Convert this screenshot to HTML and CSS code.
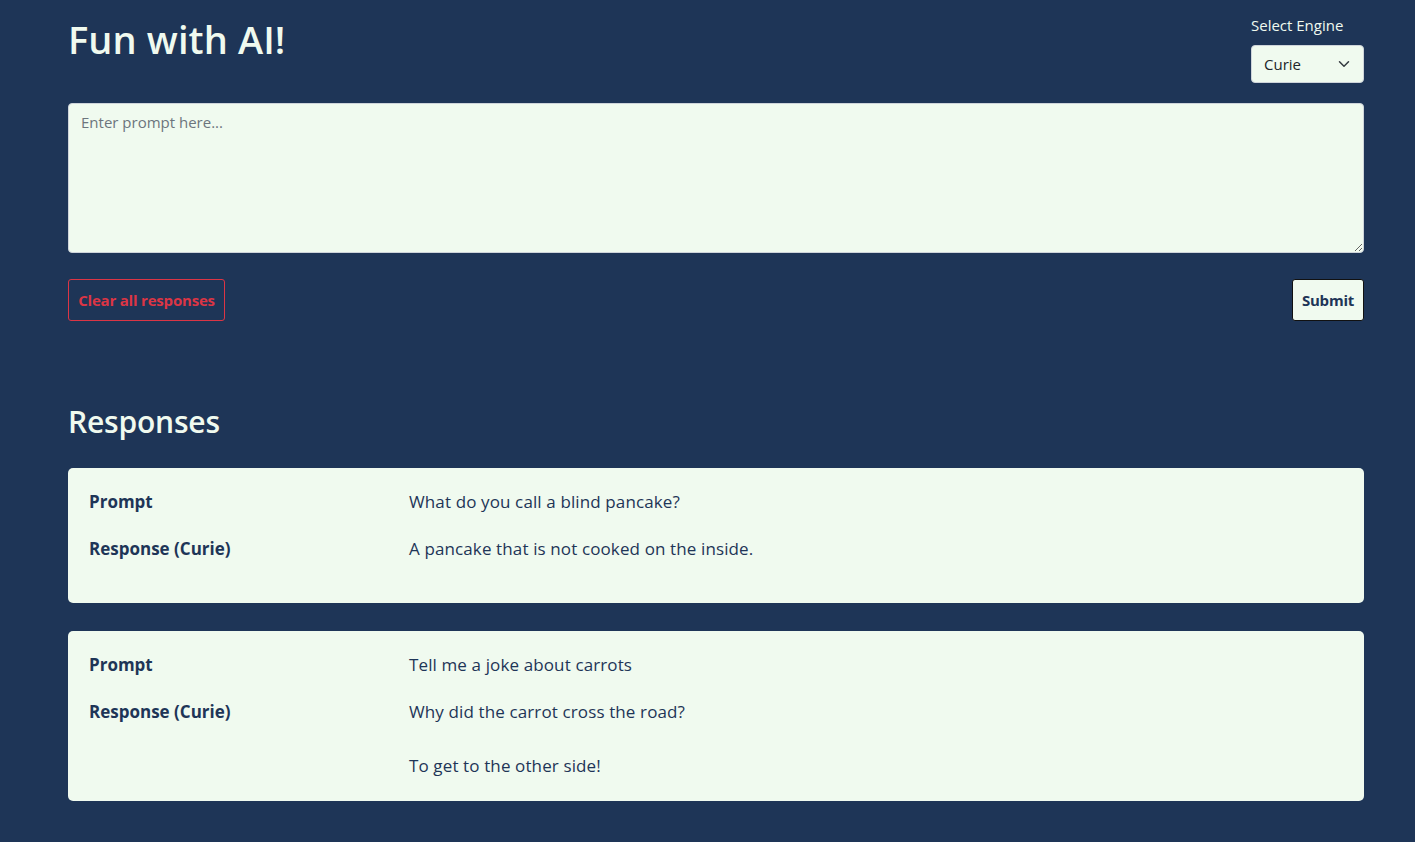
FILE: index.html
```html
<!DOCTYPE html>
<html lang="en">
<head>
<meta charset="utf-8">
<title>Fun with AI!</title>
<link rel="stylesheet" href="styles.css">
</head>
<body>
<main class="page">
  <header class="top">
    <h1 class="title">Fun with AI!</h1>
    <div class="engine">
      <label class="engine-label" for="engine">Select Engine</label>
      <div class="select">
        <span class="select-value">Curie</span>
        <svg class="chevron" width="16" height="16" viewBox="0 0 16 16" aria-hidden="true"><path d="M2 5l6 6 6-6" fill="none" stroke="#343a40" stroke-width="2" stroke-linecap="round" stroke-linejoin="round"/></svg>
      </div>
    </div>
  </header>

  <textarea class="prompt-input" placeholder="Enter prompt here..."></textarea>

  <div class="actions">
    <button class="btn btn-clear">Clear all responses</button>
    <button class="btn btn-submit">Submit</button>
  </div>

  <h2 class="responses-title">Responses</h2>

  <section class="card">
    <div class="row">
      <div class="label">Prompt</div>
      <div class="value">What do you call a blind pancake?</div>
    </div>
    <div class="row">
      <div class="label">Response (Curie)</div>
      <div class="value">A pancake that is not cooked on the inside.</div>
    </div>
  </section>

  <section class="card">
    <div class="row">
      <div class="label">Prompt</div>
      <div class="value">Tell me a joke about carrots</div>
    </div>
    <div class="row">
      <div class="label">Response (Curie)</div>
      <div class="value">Why did the carrot cross the road?

To get to the other side!</div>
    </div>
  </section>
</main>
</body>
</html>
```

FILE: styles.css
```css
* { box-sizing: border-box; }

html, body {
  margin: 0;
  padding: 0;
  background: #1e3557;
  font-family: "Open Sans", "Noto Sans", sans-serif;
  color: #1e3557;
}

.page {
  width: 1296px;
  margin-left: 68px;
  padding-top: 13px;
}

.top {
  display: flex;
  justify-content: space-between;
  align-items: flex-start;
}

.title {
  margin: 0;
  font-size: 38px;
  font-weight: 600;
  line-height: 52px;
  color: #f0faef;
  letter-spacing: 0.1px;
}

.engine {
  display: flex;
  flex-direction: column;
  align-items: flex-start;
}

.engine-label {
  color: #f0faef;
  font-size: 15px;
  line-height: 24px;
  margin-bottom: 8px;
}

.select {
  width: 113px;
  height: 38px;
  background: #f0faef;
  border: 1px solid #ced4da;
  border-radius: 4px;
  display: flex;
  align-items: center;
  justify-content: space-between;
  padding: 0 13px 0 12px;
  font-size: 15px;
  color: #212529;
}

.chevron { width: 12px; height: 12px; }

.prompt-input {
  display: block;
  width: 100%;
  height: 150px;
  margin-top: 20px;
  background: #f0faef;
  border: 1px solid #ced4da;
  border-radius: 4px;
  padding: 6px 12px;
  font-family: inherit;
  font-size: 15px;
  line-height: 24px;
  color: #212529;
  resize: vertical;
}

.prompt-input::placeholder { color: #6c757d; }

.actions {
  display: flex;
  justify-content: space-between;
  margin-top: 26px;
}

.btn {
  height: 42px;
  border-radius: 3px;
  font-family: inherit;
  font-size: 15px;
  font-weight: 700;
  padding: 0 6px;
  cursor: pointer;
  letter-spacing: -0.2px;
}

.btn-clear {
  width: 157px;
  background: transparent;
  border: 1px solid #dc3545;
  color: #dc3545;
}

.btn-submit {
  width: 72px;
  background: #f0faef;
  border: 1px solid #111;
  color: #1e3557;
}

.responses-title {
  margin: 79px 0 0;
  font-size: 30px;
  font-weight: 600;
  line-height: 44px;
  color: #f0faef;
  letter-spacing: -0.2px;
}

.card {
  background: #f0faef;
  border-radius: 5px;
  padding: 20px 21px 22px;
  margin-top: 24px;
  min-height: 135px;
}

.card + .card { margin-top: 28px; }

.row {
  display: grid;
  grid-template-columns: 296px 1fr;
  column-gap: 24px;
  font-size: 17px;
  line-height: 27px;
}

.row + .row { margin-top: 20px; }

.label {
  font-weight: 700;
}

.value {
  white-space: pre-line;
  letter-spacing: 0.12px;
}
```
